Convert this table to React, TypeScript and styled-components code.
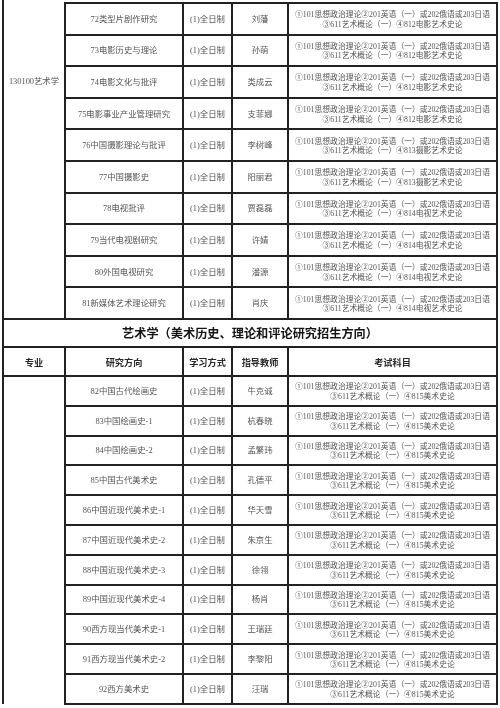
import React from 'react';
import styled, { createGlobalStyle } from 'styled-components';

interface Row {
  direction: string;
  teacher: string;
  subject: string;
}

const filmRows: Row[] = [
  { direction: '72类型片剧作研究', teacher: '刘藩', subject: '812电影艺术史论' },
  { direction: '73电影历史与理论', teacher: '孙萌', subject: '812电影艺术史论' },
  { direction: '74电影文化与批评', teacher: '类成云', subject: '812电影艺术史论' },
  { direction: '75电影事业产业管理研究', teacher: '支菲娜', subject: '812电影艺术史论' },
  { direction: '76中国摄影理论与批评', teacher: '李树峰', subject: '813摄影艺术史论' },
  { direction: '77中国摄影史', teacher: '阳丽君', subject: '813摄影艺术史论' },
  { direction: '78电视批评', teacher: '贾磊磊', subject: '814电视艺术史论' },
  { direction: '79当代电视剧研究', teacher: '许婧', subject: '814电视艺术史论' },
  { direction: '80外国电视研究', teacher: '潘源', subject: '814电视艺术史论' },
  { direction: '81新媒体艺术理论研究', teacher: '肖庆', subject: '814电视艺术史论' },
];

const artRows: Row[] = [
  { direction: '82中国古代绘画史', teacher: '牛克诚', subject: '815美术史论' },
  { direction: '83中国绘画史-1', teacher: '杭春晓', subject: '815美术史论' },
  { direction: '84中国绘画史-2', teacher: '孟繁玮', subject: '815美术史论' },
  { direction: '85中国古代美术史', teacher: '孔德平', subject: '815美术史论' },
  { direction: '86中国近现代美术史-1', teacher: '华天雪', subject: '815美术史论' },
  { direction: '87中国近现代美术史-2', teacher: '朱京生', subject: '815美术史论' },
  { direction: '88中国近现代美术史-3', teacher: '徐翎', subject: '815美术史论' },
  { direction: '89中国近现代美术史-4', teacher: '杨肖', subject: '815美术史论' },
  { direction: '90西方现当代美术史-1', teacher: '王瑞廷', subject: '815美术史论' },
  { direction: '91西方现当代美术史-2', teacher: '李黎阳', subject: '815美术史论' },
  { direction: '92西方美术史', teacher: '汪瑞', subject: '815美术史论' },
];

const GlobalStyle = createGlobalStyle`
  html, body {
    margin: 0;
    padding: 0;
    background: #ffffff;
  }
  body {
    font-family: "Liberation Serif", "Noto Sans CJK SC", serif;
    color: #555555;
  }
`;

const Page = styled.div`
  width: 500px;
  height: 708px;
  overflow: hidden;
  padding-left: 2px;
  box-sizing: border-box;
  will-change: transform;
`;

const Table = styled.table`
  width: 494px;
  border-collapse: collapse;
  table-layout: fixed;
`;

const Row = styled.tr<{ $h: number }>`
  height: ${props => props.$h}px;
`;

const Cell = styled.td`
  border: 2px solid #222;
  text-align: center;
  vertical-align: middle;
  padding: 2px 0 0;
  font-size: 8.4px;
  line-height: 10px;
  white-space: nowrap;
  overflow: hidden;
`;

const MajorCell = styled.td<{ $top: number }>`
  border-left: 2px solid #222;
  vertical-align: top;
  text-align: center;
  padding: ${props => props.$top}px 0 0;
  font-size: 8.4px;
  line-height: 10px;
  white-space: nowrap;
`;

const Spacer = styled.td`
  padding: 0;
  border: none;
`;

const SubjectCell = styled(Cell)`
  font-size: 7.8px;
  line-height: 9.5px;
`;

const Line = styled.div`
  display: block;
`;

const TitleCell = styled.td`
  border: 2px solid #222;
  text-align: center;
  vertical-align: middle;
  padding: 1px 0 0;
  font-family: "Noto Sans CJK SC", sans-serif;
  font-size: 12.2px;
  font-weight: 700;
  color: #151515;
  white-space: nowrap;
`;

const HeadCell = styled(Cell)`
  font-family: "Noto Sans CJK SC", sans-serif;
  font-size: 9.2px;
  font-weight: 700;
  color: #2a2a2a;
`;

const Subjects: React.FC<{ last: string }> = ({ last }) => (
  <>
    <Line>①101思想政治理论②201英语（一）或202俄语或203日语</Line>
    <Line>③611艺术概论（一）④{last}</Line>
  </>
);

const DataRow: React.FC<{ row: Row; h: number; major?: React.ReactNode }> = ({ row, h, major }) => (
  <Row $h={h}>
    {major}
    <Cell>{row.direction}</Cell>
    <Cell>(1)全日制</Cell>
    <Cell>{row.teacher}</Cell>
    <SubjectCell>
      <Subjects last={row.subject} />
    </SubjectCell>
  </Row>
);

export default function App() {
  return (
    <Page>
      <GlobalStyle />
      <Table>
        <colgroup>
          <col style={{ width: 62 }} />
          <col style={{ width: 118 }} />
          <col style={{ width: 49 }} />
          <col style={{ width: 56 }} />
          <col style={{ width: 209 }} />
        </colgroup>
        <tbody>
          <Row $h={3}>
            <MajorCell rowSpan={11} $top={77}>130100艺术学</MajorCell>
            <Spacer colSpan={4} />
          </Row>
          {filmRows.map(r => (
            <DataRow key={r.direction} row={r} h={31.6} />
          ))}
          <Row $h={28}>
            <TitleCell colSpan={5}>艺术学（美术历史、理论和评论研究招生方向）</TitleCell>
          </Row>
          <Row $h={29}>
            <HeadCell>专业</HeadCell>
            <HeadCell>研究方向</HeadCell>
            <HeadCell>学习方式</HeadCell>
            <HeadCell>指导教师</HeadCell>
            <HeadCell>考试科目</HeadCell>
          </Row>
          {artRows.map((r, i) => (
            <DataRow
              key={r.direction}
              row={r}
              h={29.8}
              major={i === 0 ? <MajorCell rowSpan={11} $top={0} /> : undefined}
            />
          ))}
        </tbody>
      </Table>
    </Page>
  );
}
